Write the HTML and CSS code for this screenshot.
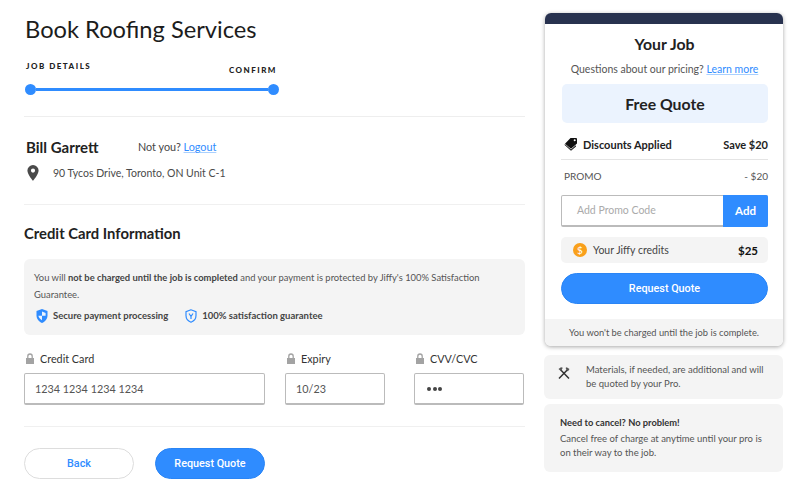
FILE: index.html
```html
<!DOCTYPE html>
<html lang="en">
<head>
<meta charset="utf-8">
<title>Book Roofing Services</title>
<link rel="stylesheet" href="styles.css">
</head>
<body>
<div class="page">
  <main class="main">
    <h1 class="title">Book Roofing Services</h1>
    <div class="stepper">
      <div class="step-labels">
        <span class="step-label">JOB DETAILS</span>
        <span class="step-label step-label-last">CONFIRM</span>
      </div>
      <div class="track"><span class="dot"></span><span class="bar"></span><span class="dot"></span></div>
    </div>
    <section class="user">
      <div class="user-row">
        <strong class="user-name">Bill Garrett</strong>
        <span class="user-alt">Not you? <a class="link" href="#">Logout</a></span>
      </div>
      <div class="address">
        <svg class="pin" viewBox="0 0 12 16" width="12" height="16"><path fill="#4a4a4a" fill-rule="evenodd" d="M6 0a5.600 5.600 0 0 0-5.600 5.600C.4 9.400 6 16 6 16s5.600-6.600 5.600-10.400A5.600 5.600 0 0 0 6 0zm0 3.500a2.100 2.100 0 1 1 0 4.200 2.100 2.100 0 0 1 0-4.200z"/></svg>
        <span>90 Tycos Drive, Toronto, ON Unit C-1</span>
      </div>
    </section>
    <section class="payment">
      <h2 class="section-title">Credit Card Information</h2>
      <div class="notice">
        <p class="notice-text">You will <b>not be charged until the job is completed</b> and your payment is protected by Jiffy's 100% Satisfaction Guarantee.</p>
        <div class="badges">
          <span class="badge">
            <svg viewBox="0 0 12 14" width="12" height="14"><path fill="#2f8cff" d="M6 0 .5 2v4.500C.5 10 3 12.800 6 14c3-1.200 5.500-4 5.500-7.500V2z"/><path fill="#fff" d="M6 2.500v4.300H2.400c.2 1.500 1.800 3.500 3.600 4.400V6.800h3.600V4z" opacity=".9"/></svg>
            Secure payment processing
          </span>
          <span class="badge">
            <svg viewBox="0 0 12 14" width="12" height="14"><path fill="none" stroke="#2f8cff" stroke-width="1.200" d="M6 .8 1 2.600v4C1 10 3.300 12.300 6 13.300c2.700-1 5-3.300 5-6.700v-4z"/><path fill="none" stroke="#2f8cff" stroke-width="1.200" d="m4 4.500 2 3 2-3M6 7.500v2.500"/></svg>
            100% satisfaction guarantee
          </span>
        </div>
      </div>
      <div class="fields">
        <label class="field field-card">
          <span class="field-label"><svg class="lock" viewBox="0 0 10 11" width="10" height="11"><path fill="#a3a3a3" d="M1 5h8v6H1z"/><path fill="none" stroke="#a3a3a3" stroke-width="1.300" d="M2.800 5V3.200a2.200 2.200 0 0 1 4.400 0V5"/></svg>Credit Card</span>
          <span class="input">1234 1234 1234 1234</span>
        </label>
        <label class="field field-exp">
          <span class="field-label"><svg class="lock" viewBox="0 0 10 11" width="10" height="11"><path fill="#a3a3a3" d="M1 5h8v6H1z"/><path fill="none" stroke="#a3a3a3" stroke-width="1.300" d="M2.800 5V3.200a2.200 2.200 0 0 1 4.400 0V5"/></svg>Expiry</span>
          <span class="input">10/23</span>
        </label>
        <label class="field field-cvv">
          <span class="field-label"><svg class="lock" viewBox="0 0 10 11" width="10" height="11"><path fill="#a3a3a3" d="M1 5h8v6H1z"/><path fill="none" stroke="#a3a3a3" stroke-width="1.300" d="M2.800 5V3.200a2.200 2.200 0 0 1 4.400 0V5"/></svg>CVV/CVC</span>
          <span class="input input-dots"><i></i><i></i><i></i></span>
        </label>
      </div>
    </section>
    <div class="actions">
      <button class="btn btn-back">Back</button>
      <button class="btn btn-primary btn-submit">Request Quote</button>
    </div>
  </main>
  <aside class="side">
    <div class="card">
      <div class="card-top"></div>
      <div class="card-body">
        <h2 class="card-title">Your Job</h2>
        <p class="card-sub">Questions about our pricing? <a class="link" href="#">Learn more</a></p>
        <div class="quote">Free Quote</div>
        <div class="discount">
          <span class="discount-name">
            <svg viewBox="0 0 13 13" width="13" height="13"><path fill="#111" fill-rule="evenodd" d="M6.500 0H12a1 1 0 0 1 1 1v4.500L7 10.800 1 5.800zm4.200 1.300a1 1 0 1 0 0 2 1 1 0 0 0 0-2z"/><path fill="#111" d="M.4 6.800 7 12.800l5-4.300-.2-1.300L7 11.500 1 6.300z"/></svg>
            Discounts Applied
          </span>
          <b>Save $20</b>
        </div>
        <div class="promo"><span>PROMO</span><span>- $20</span></div>
        <div class="promo-input"><span class="promo-field">Add Promo Code</span><span class="promo-add">Add</span></div>
        <div class="credits">
          <span class="coin">$</span>
          <span class="credits-name">Your Jiffy credits</span>
          <b>$25</b>
        </div>
        <button class="btn btn-primary btn-wide">Request Quote</button>
      </div>
      <div class="card-foot">You won't be charged until the job is complete.</div>
    </div>
    <div class="note note-materials">
      <svg class="tools" viewBox="0 0 12 12" width="12" height="12"><path fill="none" stroke="#333" stroke-width="1.500" d="M2.800 3 11 11.400M9.200 3 1 11.400"/><path fill="#555" d="M.5 2 3 .2l1.800.6L3 4.200zM7.600 1l1.100-.8 2.800 1.700-1.500 2.400-1-.2z"/></svg>
      <p>Materials, if needed, are additional and will be quoted by your Pro.</p>
    </div>
    <div class="note note-cancel">
      <b>Need to cancel? No problem!</b>
      <p>Cancel free of charge at anytime until your pro is on their way to the job.</p>
    </div>
  </aside>
</div>
</body>
</html>
```
FILE: styles.css
```css
* { box-sizing: border-box; }
html, body { margin: 0; height: 100%; background: #fff; overflow: hidden; }
body { font-family: "Lato", "Noto Sans", sans-serif; color: #4a4a4a; font-size: 11px; }
p { margin: 0; }
.link { color: #2f8cff; text-decoration: underline; text-decoration-color: #a9d0ff; }
.page { display: flex; align-items: flex-start; gap: 19px; padding: 13px 17px 0 24px; }
.main { width: 501px; flex: none; }
.side { width: 239px; flex: none; }

.title { margin: 0; font-size: 23.700px; font-weight: 400; line-height: 32px; color: #1c1c1c; padding-left: 1px; }
.stepper { padding: 15px 0 0 1px; height: 72px; border-bottom: 1px solid #eee; }
.step-labels { display: flex; justify-content: space-between; width: 252px; padding-left: 1px; }
.step-label { font-size: 8px; font-weight: 900; letter-spacing: 1.500px; line-height: 12px; color: #222; }
.step-label-last { margin-top: 4px; }
.track { display: flex; align-items: center; width: 254px; margin-top: 8px; }
.dot { width: 11px; height: 11px; border-radius: 50%; background: #2f8cff; flex: none; }
.bar { flex: 1; height: 3.500px; background: #2f8cff; }

.user { height: 88px; padding: 19px 0 0 2px; border-bottom: 1px solid #f0f0f0; }
.user-row { display: flex; align-items: center; height: 21px; }
.user-name { width: 112px; font-size: 15px; font-weight: 700; color: #222; }
.user-alt { font-size: 10.800px; color: #444; }
.address { display: flex; align-items: center; gap: 14px; margin-top: 8px; font-size: 10.500px; padding-left: 1px; }

.payment { border-bottom: 1px solid #f0f0f0; height: 222px; }
.section-title { margin: 0; padding-top: 18px; font-size: 14.800px; font-weight: 700; line-height: 20px; color: #222; }
.notice { margin-top: 16px; height: 76px; padding: 11px 10px 0; background: #f4f4f4; border-radius: 6px; font-size: 9.400px; line-height: 16.500px; color: #555; }
.notice b { color: #444; }
.badges { display: flex; gap: 17px; margin-top: 5px; padding-left: 2px; }
.badge { display: flex; align-items: center; gap: 5px; font-weight: 700; font-size: 9.500px; color: #444; }

.fields { display: flex; margin-top: 15px; }
.field { display: block; }
.field-card { width: 241px; margin-right: 20px; }
.field-exp { width: 100px; margin-right: 29px; }
.field-cvv { width: 110px; }
.field-label { display: flex; align-items: center; gap: 5px; height: 16px; font-size: 10.800px; color: #333; padding-left: 1px; }
.input { display: flex; align-items: center; height: 32px; margin-top: 7px; padding-left: 10px; border: 1px solid #bbb; border-bottom-width: 2px; border-radius: 2px; font-size: 10.800px; color: #555; }
.input-dots { gap: 1.500px; padding-left: 12px; }
.input-dots i { width: 4px; height: 4px; border-radius: 50%; background: #444; }

.actions { display: flex; gap: 21px; margin-top: 21px; }
.btn { font-family: "Roboto", sans-serif; font-weight: 500; font-size: 10.800px; height: 31px; border-radius: 16px; cursor: pointer; }
.btn-back { width: 110px; background: #fff; border: 1px solid #ddd; color: #2f8cff; }
.btn-primary { background: #2f8cff; border: 1px solid #2a85f5; color: #fff; }
.btn-submit { width: 110px; }
.btn-wide { display: block; width: 100%; margin-top: 10px; }

.card { height: 333px; margin-left: 1px; width: 238px; border-radius: 6px; background: #fff; box-shadow: 0 1px 4px rgba(0,0,0,.35); overflow: hidden; display: flex; flex-direction: column; }
.card-top { height: 11px; background: #28324f; flex: none; }
.card-body { flex: 1; padding: 0 15px 0 16px; }
.card-title { margin: 0; padding-top: 10px; font-size: 15.800px; font-weight: 700; line-height: 20px; text-align: center; color: #222; }
.card-sub { margin-top: 8px; font-size: 10.500px; line-height: 14px; text-align: center; color: #555; }
.quote { height: 39px; margin-top: 8px; margin-left: 1px; background: #ebf3fe; border-radius: 5px; text-align: center; line-height: 40px; font-size: 15.800px; font-weight: 700; color: #222; }
.discount { display: flex; justify-content: space-between; align-items: center; height: 37px; padding-top: 7px; border-bottom: 1px solid #e4e4e4; font-size: 11px; color: #222; }
.discount-name { display: flex; align-items: center; gap: 6px; font-weight: 700; padding-left: 3px; }
.promo { display: flex; justify-content: space-between; height: 32px; margin-bottom: 3px; align-items: center; padding: 0 0 0 3px; font-size: 10px; color: #555; }
.promo-input { display: flex; height: 32px; border: 1px solid #bbb; border-bottom-width: 2px; border-radius: 2px; }
.promo-field { flex: 1; padding-left: 15px; line-height: 29px; font-size: 10.500px; color: #aaa; }
.promo-add { width: 45px; margin: -1px -1px -2px 0; background: #2f8cff; color: #fff; text-align: center; line-height: 31px; font-size: 11.500px; font-weight: 700; border-radius: 0 2px 2px 0; }
.credits { display: flex; align-items: center; height: 26px; margin-top: 10px; padding: 0 10px 0 12px; background: #f4f4f4; border-radius: 5px; font-size: 10.500px; color: #444; }
.coin { width: 14px; height: 14px; margin-right: 6px; border-radius: 50%; background: #f9a01b; color: #fff; text-align: center; line-height: 14px; font-size: 10px; }
.credits-name { flex: 1; }
.credits b { color: #111; font-size: 11.500px; }
.card-foot { height: 27px; flex: none; background: #f4f4f4; text-align: center; line-height: 28px; font-size: 9.300px; color: #555; }

.note { background: #f4f4f4; border-radius: 6px; font-size: 9.500px; line-height: 14.300px; color: #555; }
.note-materials { display: flex; height: 44px; margin-top: 9px; padding-top: 8px; }
.note-materials p { flex: 1; padding-right: 14px; }
.tools { flex: none; margin: 4px 16px 0 14px; }
.note-cancel { height: 68px; margin-top: 5px; padding: 11px 16px 0; }
.note-cancel b { display: block; color: #333; line-height: 15px; margin-bottom: 2px; font-size: 9.300px; }
```
